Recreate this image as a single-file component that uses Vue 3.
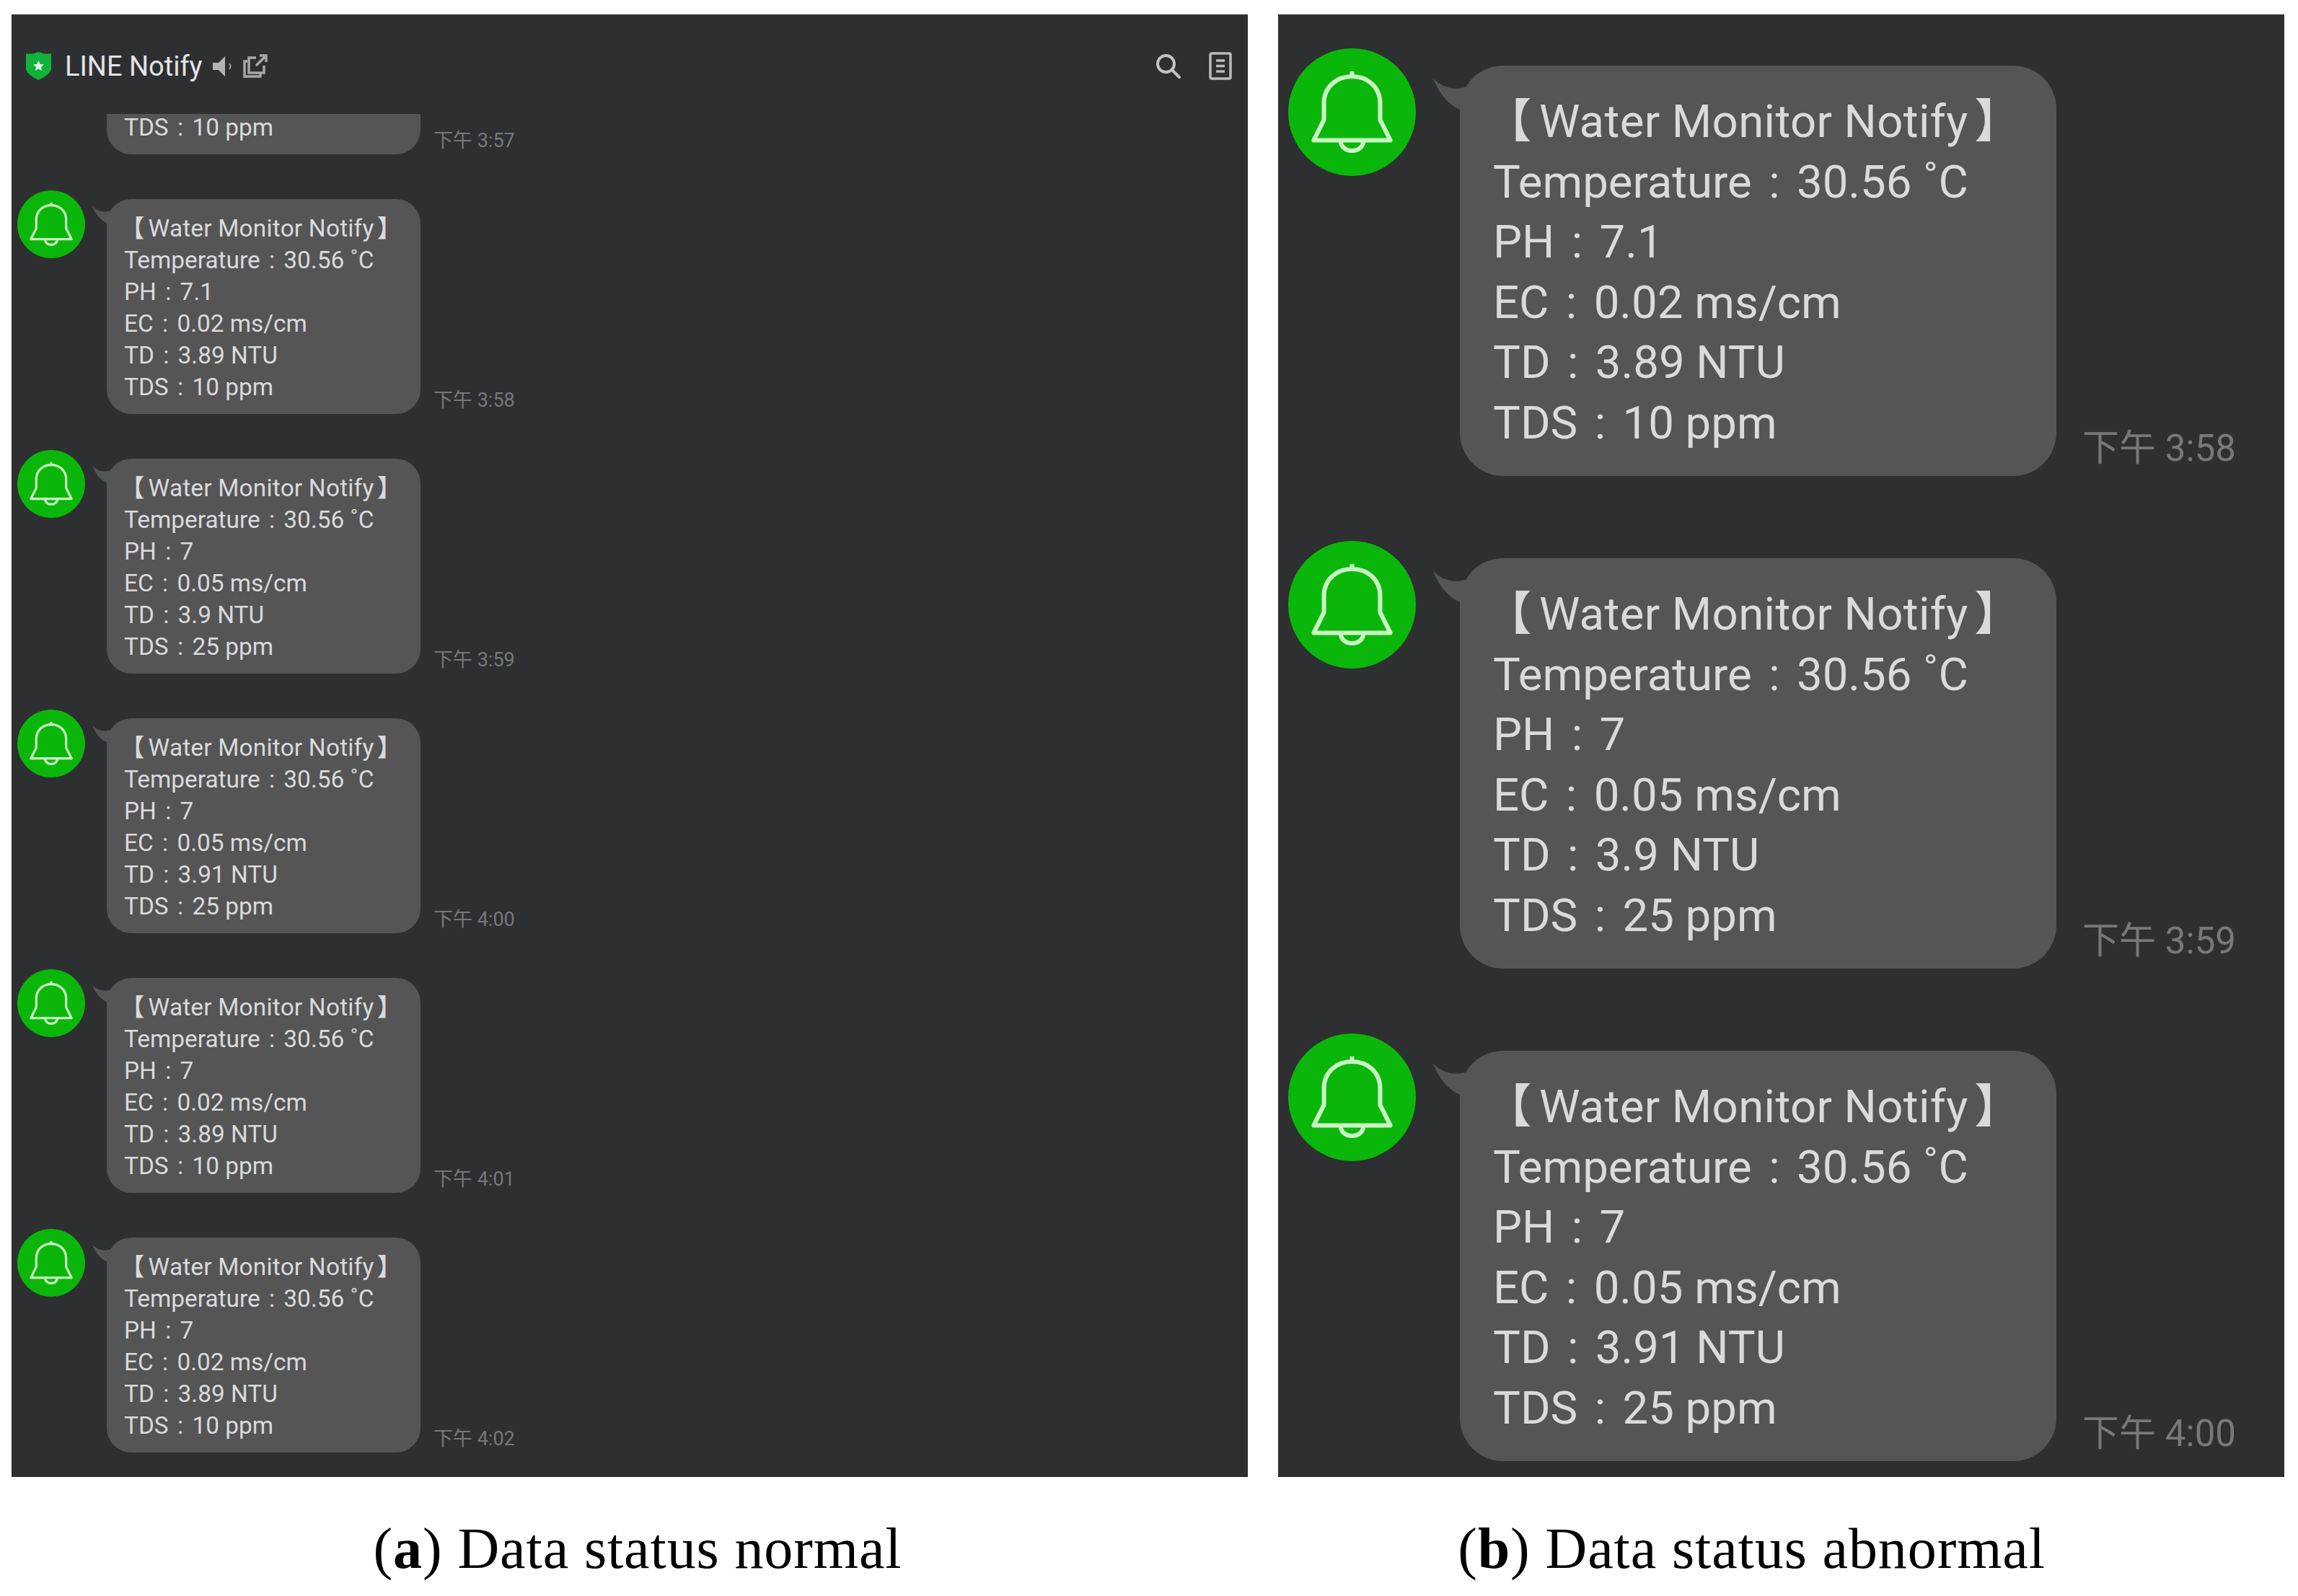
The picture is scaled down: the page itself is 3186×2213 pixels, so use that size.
<script setup>
const lines = (p, e, d, s) => [
  { label: 'Temperature', value: '30.56 ˚C' },
  { label: 'PH', value: p },
  { label: 'EC', value: `${e} ms/cm` },
  { label: 'TD', value: `${d} NTU` },
  { label: 'TDS', value: `${s} ppm` },
]
const normal = [
  { time: '下午 3:57', avatar: false, rows: lines('7', '0.02', '3.89', '10') },
  { time: '下午 3:58', avatar: true, rows: lines('7.1', '0.02', '3.89', '10') },
  { time: '下午 3:59', avatar: true, rows: lines('7', '0.05', '3.9', '25') },
  { time: '下午 4:00', avatar: true, rows: lines('7', '0.05', '3.91', '25') },
  { time: '下午 4:01', avatar: true, rows: lines('7', '0.02', '3.89', '10') },
  { time: '下午 4:02', avatar: true, rows: lines('7', '0.02', '3.89', '10') },
]
const abnormal = normal.slice(1, 4)
const panels = [
  { id: 'small', header: true, items: normal },
  { id: 'large', header: false, items: abnormal },
]
</script>

<template>
  <div class="page">
    <div class="panels">
      <section v-for="panel in panels" :key="panel.id" class="panel" :class="panel.id">
        <header v-if="panel.header" class="bar">
          <div class="bar-left">
            <svg class="shield" viewBox="0 0 35 39">
              <path d="M0 2 Q9 4 17.500 0 Q26 4 35 2 V24 Q33 32 17.500 39 Q2 32 0 24 Z" fill="#10b23a" />
              <path d="M17.500 12 L19.800 17 L25 17.600 L21 21 L22.200 26 L17.500 23.500 L12.800 26 L14 21 L10 17.600 L15.200 17 Z" fill="#dff5e2" />
            </svg>
            <span class="bar-title">LINE Notify</span>
            <svg class="speaker" viewBox="0 0 27 30">
              <path d="M0 10 H8 L17 1 V29 L8 20 H0 Z" fill="#b4b4b4" />
              <path d="M23 11 Q26 15 23 19" fill="none" stroke="#a0a0a0" stroke-width="2" />
            </svg>
            <svg class="copy" viewBox="0 0 34 33" fill="none" stroke="#a8a8a8" stroke-width="3.500">
              <path d="M6 10 H2 V31 H24 V27" />
              <path d="M18 5 H8 V26 H29 V16" />
              <path d="M18 16 L31 3 M23 2 H32 V11" />
            </svg>
          </div>
          <div class="bar-right">
            <svg class="search" viewBox="0 0 35 35" fill="none" stroke="#c4c4c4" stroke-width="4">
              <circle cx="14.500" cy="14.500" r="11.500" />
              <path d="M23 23 L33 33" stroke-linecap="round" />
            </svg>
            <svg class="doc" viewBox="0 0 32 39" fill="none" stroke="#bcbcbc" stroke-width="3.500">
              <rect x="2" y="2" width="28" height="35" rx="2" />
              <path d="M10 12 H22 M10 19.500 H22 M10 27 H22" />
            </svg>
          </div>
        </header>
        <div class="list">
          <article v-for="item in panel.items" :key="item.time" class="msg">
            <div class="avatar-slot">
              <div v-if="item.avatar" class="avatar">
                <svg class="bell" viewBox="0 0 100 100" fill="none" stroke="#c9f7c2" stroke-width="3.400" stroke-linejoin="round">
                  <path d="M20 72 L28 56 V43 C28 30 38 22 50 22 C62 22 72 30 72 43 V56 L80 72 Z" />
                  <path d="M41 72 C41 83 59 83 59 72" />
                  <path d="M50 18 V22" />
                </svg>
              </div>
            </div>
            <div class="bubble">
              <svg class="tail" viewBox="0 0 24 24">
                <path d="M0 0 Q10 10 24 6 V24 Q8 20 0 0 Z" fill="#555556" />
              </svg>
              <div class="title"><span class="br-open">【</span>Water Monitor Notify<span class="br-close">】</span></div>
              <div v-for="row in item.rows" :key="row.label" class="row">{{ row.label }}<span class="colon">:</span>{{ row.value }}</div>
            </div>
            <time class="time">{{ item.time }}</time>
          </article>
        </div>
      </section>
    </div>
    <div class="captions">
      <p class="caption cap-a">(<b>a</b>) Data status normal</p>
      <p class="caption cap-b">(<b>b</b>) Data status abnormal</p>
    </div>
  </div>
</template>

<style scoped>
.page {
  width: 3186px;
  height: 2213px;
  background: #fff;
  display: flex;
  flex-direction: column;
  padding: 20px 19px 0 16px;
  box-sizing: border-box;
  font-family: Roboto, "Noto Sans CJK TC", sans-serif;
}
.panels {
  display: flex;
  gap: 42px;
  height: 2028px;
}
.panel {
  background: #2e2f31;
  display: flex;
  flex-direction: column;
  overflow: hidden;
  box-sizing: border-box;
}
.small {
  width: 1714px;
  --fs: 33.400px;
  --lh: 44px;
  --av: 94px;
  --bw: 435px;
  --pad-x: 24px;
  --pad-t: 19px;
  --pad-b: 15px;
  --rad: 34px;
  --tail: 25px;
  --time: 27px;
  --ml: 30px;
  --top: 12px;
  --msg-gap: 50px;
  --time-ml: 18px;
  --time-mb: 2px;
}
.large {
  width: 1395px;
  --fs: 63.500px;
  --lh: 83.500px;
  --av: 177px;
  --bw: 827px;
  --pad-x: 46px;
  --pad-t: 36px;
  --pad-b: 32px;
  --rad: 60px;
  --tail: 46px;
  --time: 51px;
  --ml: 61px;
  --top: 24px;
  --msg-gap: 90px;
  --time-ml: 36px;
  --time-mb: 6px;
  padding: 47px 0 0 14px;
}
.bar {
  height: 138px;
  flex: none;
  display: flex;
  justify-content: space-between;
  align-items: center;
  padding: 5px 22px 0 20px;
  box-sizing: border-box;
}
.bar-left,
.bar-right {
  display: flex;
  align-items: center;
}
.bar-right {
  gap: 39px;
}
.shield {
  width: 35px;
  height: 39px;
}
.bar-title {
  margin-left: 19px;
  font-size: 38px;
  color: #e2e4e6;
}
.speaker {
  width: 27px;
  height: 30px;
  margin-left: 14px;
}
.copy {
  width: 34px;
  height: 33px;
  margin-left: 15px;
}
.search {
  width: 35px;
  height: 35px;
}
.doc {
  width: 32px;
  height: 39px;
}
.list {
  flex: 1;
  min-height: 0;
  display: flex;
  flex-direction: column;
  justify-content: flex-end;
  gap: var(--msg-gap);
  padding-left: 8px;
  padding-bottom: 34px;
  overflow: hidden;
}
.large .list {
  justify-content: flex-start;
  padding: 0;
}
.msg {
  flex: none;
  display: flex;
  align-items: flex-start;
}
.avatar-slot {
  width: var(--av);
  flex: none;
}
.avatar {
  width: var(--av);
  height: var(--av);
  border-radius: 50%;
  background: #0bb60b;
  display: flex;
}
.bell {
  width: 100%;
  height: 100%;
}
.bubble {
  position: relative;
  width: var(--bw);
  margin-left: var(--ml);
  margin-top: var(--top);
  padding: var(--pad-t) var(--pad-x) var(--pad-b);
  box-sizing: border-box;
  background: #555556;
  border-radius: var(--rad);
  color: #d9dadb;
  font-size: var(--fs);
  line-height: var(--lh);
  white-space: nowrap;
}
.tail {
  position: absolute;
  width: var(--tail);
  height: var(--tail);
  left: calc(var(--tail) * -0.8);
  top: calc(var(--tail) * 0.4);
}
.title {
  letter-spacing: 0.006em;
}
.br-open {
  font-weight: 700;
  margin-left: -0.16em;
  margin-right: 0.16em;
}
.br-close {
  font-weight: 700;
  margin-left: 0.14em;
}
.colon {
  display: inline-block;
  width: 0.98em;
  text-align: center;
}
.time {
  align-self: flex-end;
  margin-left: var(--time-ml);
  margin-bottom: var(--time-mb);
  font-size: var(--time);
  color: #77787a;
  white-space: nowrap;
}
.captions {
  display: flex;
  gap: 42px;
  font-family: "Liberation Serif", serif;
}
.caption {
  margin: 0;
  padding-top: 64px;
  font-size: 80px;
  line-height: 70px;
  letter-spacing: 0.9px;
  color: #000;
  text-align: center;
  box-sizing: border-box;
}
.cap-a {
  width: 1714px;
  padding-left: 22px;
}
.cap-b {
  width: 1395px;
  padding-right: 82px;
}
</style>
